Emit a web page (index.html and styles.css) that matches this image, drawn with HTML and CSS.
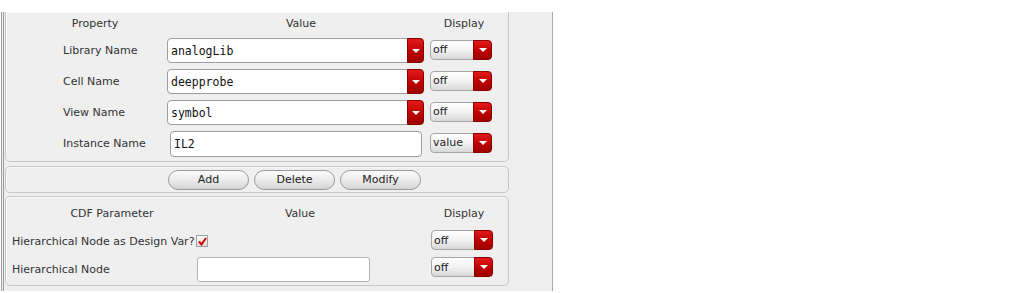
FILE: index.html
```html
<!DOCTYPE html>
<html>
<head>
<meta charset="utf-8">
<link rel="stylesheet" href="styles.css">
</head>
<body>
<div class="frame">
  <div class="group props">
    <div class="head">
      <span class="h-prop">Property</span>
      <span class="h-val">Value</span>
      <span class="h-disp">Display</span>
    </div>
    <div class="rows">
      <div class="lbl">Library Name</div>
      <div class="combo"><span class="ctext">analogLib</span><span class="rbtn"><i class="tri"></i></span></div>
      <div class="dcombo"><span class="dtext">off</span><span class="dbtn"><i class="tri"></i></span></div>

      <div class="lbl">Cell Name</div>
      <div class="combo"><span class="ctext">deepprobe</span><span class="rbtn"><i class="tri"></i></span></div>
      <div class="dcombo"><span class="dtext">off</span><span class="dbtn"><i class="tri"></i></span></div>

      <div class="lbl">View Name</div>
      <div class="combo"><span class="ctext">symbol</span><span class="rbtn"><i class="tri"></i></span></div>
      <div class="dcombo"><span class="dtext">off</span><span class="dbtn"><i class="tri"></i></span></div>

      <div class="lbl">Instance Name</div>
      <div class="field"><span class="ctext">IL2</span></div>
      <div class="dcombo"><span class="dtext">value</span><span class="dbtn"><i class="tri"></i></span></div>
    </div>
  </div>

  <div class="group buttons">
    <span class="btn">Add</span>
    <span class="btn">Delete</span>
    <span class="btn">Modify</span>
  </div>

  <div class="group cdf">
    <div class="head">
      <span class="h-cdf">CDF Parameter</span>
      <span class="h-val2">Value</span>
      <span class="h-disp">Display</span>
    </div>
    <div class="crow first">
      <span class="clbl">Hierarchical Node as Design Var?</span>
      <span class="check"><svg width="9" height="9" viewBox="0 0 9 9"><path d="M1 4.5 L3.5 7.5 L8 1" fill="none" stroke="#d40000" stroke-width="2"/></svg></span>
      <span class="spacer"></span>
      <div class="dcombo"><span class="dtext">off</span><span class="dbtn"><i class="tri"></i></span></div>
    </div>
    <div class="crow second">
      <span class="clbl w">Hierarchical Node</span>
      <span class="nfield"></span>
      <span class="spacer"></span>
      <div class="dcombo"><span class="dtext">off</span><span class="dbtn"><i class="tri"></i></span></div>
    </div>
  </div>
</div>
</body>
</html>
```

FILE: styles.css
```css
* { box-sizing: border-box; }
body {
  margin: 0;
  background: #ffffff;
  font-family: "DejaVu Sans", sans-serif;
  font-size: 11px;
  color: #333333;
}
.frame {
  margin: 12px 0 0 1px;
  width: 552px;
  height: 279px;
  background: #efefef;
  border-left: 3px double #9c9c9c;
  border-right: 1px solid #a9a9a9;
  padding: 0 42px 0 1px;
}
.group {
  width: 504px;
  border: 1px solid #c6c6c6;
  border-radius: 5px;
  box-shadow: inset 1px 1px 0 #fafafa;
}
.props {
  border-top: none;
  border-radius: 0 0 5px 5px;
  height: 150px;
  padding: 0 0 0 57px;
}
.head {
  display: flex;
  height: 22px;
  align-items: center;
}
.head span { flex-shrink: 0; white-space: nowrap; }
.props .head { margin-left: -57px; }
.h-prop { width: 178px; text-align: center; }
.h-val { width: 234px; text-align: center; }
.h-disp { width: 92px; text-align: center; }
.rows {
  margin-top: 4px;
  display: grid;
  grid-template-columns: 98px 257px 62px;
  grid-auto-rows: 25px;
  column-gap: 6px;
  row-gap: 6px;
  align-items: center;
}
.lbl { line-height: 25px; }
.combo, .field {
  height: 25px;
  display: flex;
  background: #ffffff;
  border: 1px solid #9e9e9e;
  border-radius: 4px;
  align-items: center;
}
.field { margin-left: 3px; width: 252px; height: 26px; }
.ctext {
  flex: 1;
  padding-left: 3px;
  font-family: "DejaVu Sans Mono", monospace;
  font-size: 11.5px;
  color: #111111;
}
.rbtn {
  width: 17px;
  height: 25px;
  margin: -1px -1px -1px 0;
  border-radius: 0 4px 4px 0;
  background: linear-gradient(#e41a1a, #b80000 60%, #a00000);
  border: 1px solid #8a0000;
  display: flex;
  align-items: center;
  justify-content: center;
}
.tri {
  display: block;
  width: 0;
  height: 0;
  border-left: 4px solid transparent;
  border-right: 4px solid transparent;
  border-top: 4px solid #ffffff;
}
.dcombo {
  width: 62px;
  height: 20px;
  display: flex;
  align-items: center;
  border: 1px solid #a6a6a6;
  border-radius: 4px;
  background: linear-gradient(#ffffff, #f2f2f2 50%, #d8d8d8);
  margin-top: -2px;
}
.dtext {
  flex: 1;
  padding-left: 2px;
  font-size: 11px;
  color: #222222;
}
.dbtn {
  width: 19px;
  height: 20px;
  margin: -1px -1px -1px 0;
  border-radius: 0 4px 4px 0;
  background: linear-gradient(#e41a1a, #b80000 60%, #a00000);
  border: 1px solid #8a0000;
  display: flex;
  align-items: center;
  justify-content: center;
}
.buttons {
  margin-top: 4px;
  height: 27px;
  display: flex;
  align-items: center;
  padding-left: 162px;
  gap: 5px;
}
.btn {
  width: 81px;
  height: 20px;
  border: 1px solid #9a9a9a;
  border-radius: 10px;
  background: linear-gradient(#fbfbfb, #ececec 50%, #d4d4d4);
  display: flex;
  align-items: center;
  justify-content: center;
  font-size: 11px;
  color: #222222;
}
.cdf {
  margin-top: 3px;
  height: 90px;
  padding: 6px 0 0 0;
}
.cdf .head { height: 20px; }
.h-cdf { width: 212px; text-align: center; }
.h-val2 { width: 164px; text-align: center; }
.cdf .h-disp { width: 164px; }
.crow {
  display: flex;
  align-items: center;
  padding-left: 6px;
}
.crow.first { margin-top: 7px; height: 20px; }
.crow.second { margin-top: 7px; height: 25px; }
.clbl { white-space: nowrap; padding-top: 2px; }
.clbl.w { width: 185px; padding-top: 0; }
.check {
  width: 12px;
  height: 12px;
  margin-left: 2px;
  margin-top: 2px;
  border: 1px solid #a0a0a0;
  background: linear-gradient(#ffffff, #dddddd);
  display: flex;
  align-items: center;
  justify-content: center;
}
.nfield {
  width: 173px;
  height: 25px;
  background: #ffffff;
  border: 1px solid #b4b4b4;
  border-radius: 3px;
}
.spacer { flex: 1; }
.crow .dcombo { margin-right: 15px; margin-top: 0; }
.crow.second .dcombo { align-self: flex-start; }
```
